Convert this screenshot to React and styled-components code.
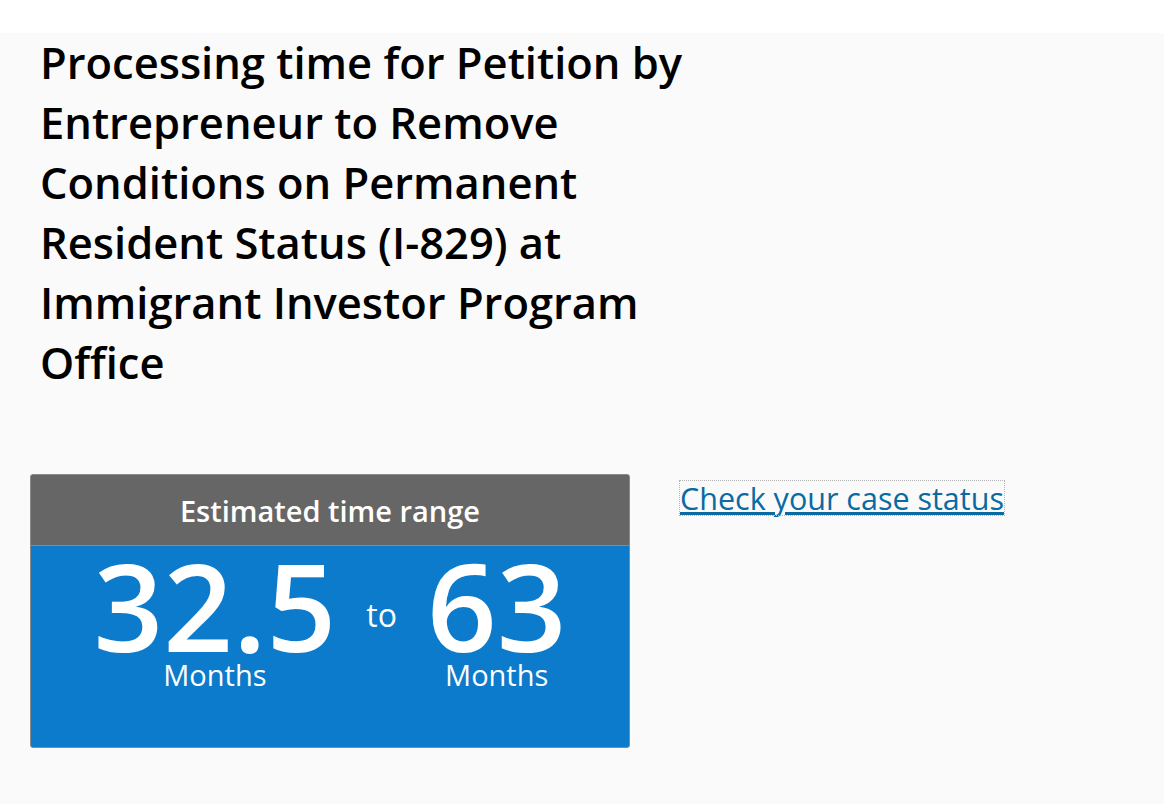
import React from "react";
import styled, { createGlobalStyle } from "styled-components";

const GlobalStyle = createGlobalStyle`
  html, body {
    margin: 0;
    padding: 0;
    background: #ffffff;
    font-family: "Open Sans", "Liberation Sans", sans-serif;
  }
`;

const Page = styled.div`
  margin-top: 33px;
  min-height: 771px;
  background: #fafafa;
  padding: 0 30px;
  box-sizing: border-box;
`;

const Title = styled.h1`
  margin: 0;
  padding: 0 0 0 10px;
  font-size: 43.5px;
  line-height: 60px;
  font-weight: 600;
  color: #000;
`;

const Row = styled.div`
  display: flex;
  align-items: flex-start;
  gap: 50px;
  margin-top: 81px;
`;

const Box = styled.div`
  width: 600px;
  height: 274px;
  box-sizing: border-box;
  border: 1px solid #8a8a8a;
  border-radius: 3px;
  overflow: hidden;
  background: #0c7bcb;
  display: flex;
  flex-direction: column;
`;

const BoxHeader = styled.div`
  height: 70px;
  flex-shrink: 0;
  background: #666666;
  color: #fff;
  font-size: 29px;
  font-weight: 600;
  display: flex;
  align-items: center;
  justify-content: center;
  border-bottom: 1px solid #8a8a8a;
`;

const Range = styled.div`
  display: flex;
  justify-content: center;
  align-items: flex-start;
  gap: 30px;
  padding-top: 9px;
  color: #fff;
`;

const Value = styled.div`
  display: flex;
  flex-direction: column;
  align-items: center;
`;

const Number = styled.span`
  font-size: 122px;
  line-height: 100px;
  font-weight: 600;
`;

const Unit = styled.span`
  font-size: 29px;
  line-height: 32px;
  margin-top: 4px;
`;

const To = styled.span`
  font-size: 32px;
  line-height: 32px;
  margin-top: 44px;
`;

const CaseLink = styled.a`
  margin-top: 7px;
  font-size: 30.5px;
  line-height: 34px;
  color: #0a6aa1;
  text-decoration: underline;
  outline: 1px dotted #b5b5b5;
  cursor: pointer;
`;

export default function App() {
  return (
    <>
      <GlobalStyle />
      <Page>
        <Title>
          Processing time for Petition by
          <br />
          Entrepreneur to Remove
          <br />
          Conditions on Permanent
          <br />
          Resident Status (I-829) at
          <br />
          Immigrant Investor Program
          <br />
          Office
        </Title>
        <Row>
          <Box>
            <BoxHeader>Estimated time range</BoxHeader>
            <Range>
              <Value>
                <Number>32.5</Number>
                <Unit>Months</Unit>
              </Value>
              <To>to</To>
              <Value>
                <Number>63</Number>
                <Unit>Months</Unit>
              </Value>
            </Range>
          </Box>
          <CaseLink>Check your case status</CaseLink>
        </Row>
      </Page>
    </>
  );
}
